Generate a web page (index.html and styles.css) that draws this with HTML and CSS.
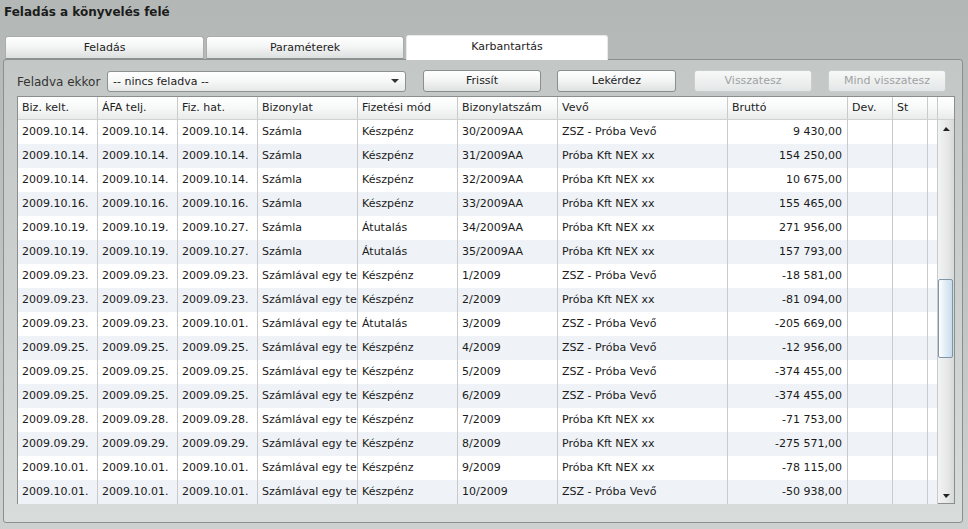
FILE: index.html
```html
<!DOCTYPE html>
<html lang="hu">
<head>
<meta charset="utf-8">
<title>Feladás a könyvelés felé</title>
<link rel="stylesheet" href="styles.css">
</head>
<body>
<div class="page">
  <div class="title">Feladás a könyvelés felé</div>
  <div class="tabs">
    <div class="tab t1">Feladás</div>
    <div class="tab t2">Paraméterek</div>
    <div class="tab t3 active">Karbantartás</div>
  </div>
  <div class="panel">
    <div class="toolbar">
      <span class="lbl">Feladva ekkor</span>
      <div class="select"><span>-- nincs feladva --</span><span class="arrow"></span></div>
      <div class="btn b1">Frissít</div>
      <div class="btn b2">Lekérdez</div>
      <div class="btn b3 disabled">Visszatesz</div>
      <div class="btn b4 disabled">Mind visszatesz</div>
    </div>
    <div class="grid">
      <div class="row head">
        <div class="c">Biz. kelt.</div><div class="c">ÁFA telj.</div><div class="c">Fiz. hat.</div><div class="c">Bizonylat</div><div class="c">Fizetési mód</div><div class="c">Bizonylatszám</div><div class="c">Vevő</div><div class="c">Bruttó</div><div class="c">Dev.</div><div class="c">St</div><div class="c"></div><div class="c last"></div>
      </div>
      <div class="body">
        <div class="rows">
          <div class="row"><div class="c">2009.10.14.</div><div class="c">2009.10.14.</div><div class="c">2009.10.14.</div><div class="c">Számla</div><div class="c">Készpénz</div><div class="c">30/2009AA</div><div class="c">ZSZ - Próba Vevő</div><div class="c r">9 430,00</div><div class="c"></div><div class="c"></div><div class="c"></div></div>
          <div class="row"><div class="c">2009.10.14.</div><div class="c">2009.10.14.</div><div class="c">2009.10.14.</div><div class="c">Számla</div><div class="c">Készpénz</div><div class="c">31/2009AA</div><div class="c">Próba Kft NEX xx</div><div class="c r">154 250,00</div><div class="c"></div><div class="c"></div><div class="c"></div></div>
          <div class="row"><div class="c">2009.10.14.</div><div class="c">2009.10.14.</div><div class="c">2009.10.14.</div><div class="c">Számla</div><div class="c">Készpénz</div><div class="c">32/2009AA</div><div class="c">Próba Kft NEX xx</div><div class="c r">10 675,00</div><div class="c"></div><div class="c"></div><div class="c"></div></div>
          <div class="row"><div class="c">2009.10.16.</div><div class="c">2009.10.16.</div><div class="c">2009.10.16.</div><div class="c">Számla</div><div class="c">Készpénz</div><div class="c">33/2009AA</div><div class="c">Próba Kft NEX xx</div><div class="c r">155 465,00</div><div class="c"></div><div class="c"></div><div class="c"></div></div>
          <div class="row"><div class="c">2009.10.19.</div><div class="c">2009.10.19.</div><div class="c">2009.10.27.</div><div class="c">Számla</div><div class="c">Átutalás</div><div class="c">34/2009AA</div><div class="c">Próba Kft NEX xx</div><div class="c r">271 956,00</div><div class="c"></div><div class="c"></div><div class="c"></div></div>
          <div class="row"><div class="c">2009.10.19.</div><div class="c">2009.10.19.</div><div class="c">2009.10.27.</div><div class="c">Számla</div><div class="c">Átutalás</div><div class="c">35/2009AA</div><div class="c">Próba Kft NEX xx</div><div class="c r">157 793,00</div><div class="c"></div><div class="c"></div><div class="c"></div></div>
          <div class="row"><div class="c">2009.09.23.</div><div class="c">2009.09.23.</div><div class="c">2009.09.23.</div><div class="c">Számlával egy te</div><div class="c">Készpénz</div><div class="c">1/2009</div><div class="c">ZSZ - Próba Vevő</div><div class="c r">-18 581,00</div><div class="c"></div><div class="c"></div><div class="c"></div></div>
          <div class="row"><div class="c">2009.09.23.</div><div class="c">2009.09.23.</div><div class="c">2009.09.23.</div><div class="c">Számlával egy te</div><div class="c">Készpénz</div><div class="c">2/2009</div><div class="c">Próba Kft NEX xx</div><div class="c r">-81 094,00</div><div class="c"></div><div class="c"></div><div class="c"></div></div>
          <div class="row"><div class="c">2009.09.23.</div><div class="c">2009.09.23.</div><div class="c">2009.10.01.</div><div class="c">Számlával egy te</div><div class="c">Átutalás</div><div class="c">3/2009</div><div class="c">ZSZ - Próba Vevő</div><div class="c r">-205 669,00</div><div class="c"></div><div class="c"></div><div class="c"></div></div>
          <div class="row"><div class="c">2009.09.25.</div><div class="c">2009.09.25.</div><div class="c">2009.09.25.</div><div class="c">Számlával egy te</div><div class="c">Készpénz</div><div class="c">4/2009</div><div class="c">ZSZ - Próba Vevő</div><div class="c r">-12 956,00</div><div class="c"></div><div class="c"></div><div class="c"></div></div>
          <div class="row"><div class="c">2009.09.25.</div><div class="c">2009.09.25.</div><div class="c">2009.09.25.</div><div class="c">Számlával egy te</div><div class="c">Készpénz</div><div class="c">5/2009</div><div class="c">ZSZ - Próba Vevő</div><div class="c r">-374 455,00</div><div class="c"></div><div class="c"></div><div class="c"></div></div>
          <div class="row"><div class="c">2009.09.25.</div><div class="c">2009.09.25.</div><div class="c">2009.09.25.</div><div class="c">Számlával egy te</div><div class="c">Készpénz</div><div class="c">6/2009</div><div class="c">ZSZ - Próba Vevő</div><div class="c r">-374 455,00</div><div class="c"></div><div class="c"></div><div class="c"></div></div>
          <div class="row"><div class="c">2009.09.28.</div><div class="c">2009.09.28.</div><div class="c">2009.09.28.</div><div class="c">Számlával egy te</div><div class="c">Készpénz</div><div class="c">7/2009</div><div class="c">Próba Kft NEX xx</div><div class="c r">-71 753,00</div><div class="c"></div><div class="c"></div><div class="c"></div></div>
          <div class="row"><div class="c">2009.09.29.</div><div class="c">2009.09.29.</div><div class="c">2009.09.29.</div><div class="c">Számlával egy te</div><div class="c">Készpénz</div><div class="c">8/2009</div><div class="c">Próba Kft NEX xx</div><div class="c r">-275 571,00</div><div class="c"></div><div class="c"></div><div class="c"></div></div>
          <div class="row"><div class="c">2009.10.01.</div><div class="c">2009.10.01.</div><div class="c">2009.10.01.</div><div class="c">Számlával egy te</div><div class="c">Készpénz</div><div class="c">9/2009</div><div class="c">Próba Kft NEX xx</div><div class="c r">-78 115,00</div><div class="c"></div><div class="c"></div><div class="c"></div></div>
          <div class="row"><div class="c">2009.10.01.</div><div class="c">2009.10.01.</div><div class="c">2009.10.01.</div><div class="c">Számlával egy te</div><div class="c">Készpénz</div><div class="c">10/2009</div><div class="c">ZSZ - Próba Vevő</div><div class="c r">-50 938,00</div><div class="c"></div><div class="c"></div><div class="c"></div></div>
        </div>
        <div class="scrollbar">
          <div class="sarrow up"></div>
          <div class="track"><div class="thumb"></div></div>
          <div class="sarrow down"></div>
        </div>
      </div>
    </div>
  </div>
</div>
</body>
</html>
```

FILE: styles.css
```css
* { box-sizing: border-box; }
html, body { margin: 0; padding: 0; }
body {
  width: 968px;
  height: 529px;
  overflow: hidden;
  font-family: "DejaVu Sans", Verdana, sans-serif;
  font-size: 11px;
  color: #1a1a1a;
  background: linear-gradient(to bottom, #b3b8b6 0%, #bcc1bf 40%, #cdd1cf 100%);
}
.page { width: 968px; height: 529px; }
.title {
  height: 35px;
  padding: 4px 0 0 4px;
  font-weight: bold;
  font-size: 12px;
  line-height: 16px;
  color: #1c1c1c;
}
.tabs {
  display: flex;
  align-items: flex-end;
  gap: 2px;
  height: 24px;
  padding-left: 5px;
}
.tab {
  height: 23px;
  line-height: 22px;
  text-align: center;
  border: 1px solid #a9aeac;
  border-bottom-color: #8f9492;
  border-radius: 3px 3px 0 0;
  background: linear-gradient(to bottom, #ffffff 0%, #f4f5f5 45%, #dde0e0 100%);
  color: #222;
}
.t1 { width: 199px; }
.t2 { width: 198px; }
.t3 { width: 202px; }
.tab.active {
  height: 25px;
  margin-bottom: -1px;
  line-height: 22px;
  background: #ffffff;
  border-color: #e8eaea;
  border-bottom: none;
  position: relative;
  z-index: 1;
}
.panel {
  margin-left: 3px;
  width: 960px;
  height: 464px;
  border: 1px solid #8b908e;
  border-radius: 3px;
  background: linear-gradient(to bottom, #c3c8c6 0%, #ccd0ce 50%, #d8dcda 100%);
  padding: 10px 0 0 13px;
}
.toolbar {
  display: flex;
  align-items: center;
  height: 22px;
}
.lbl {
  width: 90px;
  font-size: 12px;
  color: #333;
  padding-top: 1px;
}
.select {
  width: 299px;
  height: 21px;
  border: 1px solid #8d9290;
  border-radius: 3px;
  background: linear-gradient(to bottom, #ffffff 0%, #f6f7f7 50%, #e6e8e8 100%);
  display: flex;
  align-items: center;
  justify-content: space-between;
  padding: 0 6px 0 5px;
  color: #222;
}
.arrow {
  width: 0; height: 0;
  border-left: 4px solid transparent;
  border-right: 4px solid transparent;
  border-top: 4px solid #333;
}
.btn {
  height: 22px;
  width: 118px;
  line-height: 20px;
  text-align: center;
  border: 1px solid #8a8f8d;
  border-radius: 3px;
  background: linear-gradient(to bottom, #ffffff 0%, #f4f5f5 45%, #dfe2e2 100%);
  color: #222;
}
.b1 { margin-left: 17px; }
.b2 { margin-left: 16px; width: 119px; }
.b3 { margin-left: 18px; }
.b4 { margin-left: 16px; }
.btn.disabled {
  border-color: #c9cdcc;
  color: #9ea2a3;
  background: linear-gradient(to bottom, #f7f8f8 0%, #eef0f0 50%, #e4e7e7 100%);
}
.grid {
  margin-top: 4px;
  width: 938px;
  height: 408px;
  border: 1px solid #8a8f8d;
  background: #ffffff;
  display: flex;
  flex-direction: column;
}
.row {
  display: grid;
  grid-template-columns: 80px 80px 80px 100px 100px 100px 170px 120px 45px 35px 10px;
  height: 24px;
  line-height: 24px;
}
.row:nth-child(even) { background: #eff2f6; }
.row.head {
  grid-template-columns: 80px 80px 80px 100px 100px 100px 170px 120px 45px 35px 10px 16px;
  height: 23px;
  line-height: 22px;
  background: linear-gradient(to bottom, #ffffff 0%, #f7f8f8 50%, #e9ebeb 100%);
  border-bottom: 1px solid #cfd2d2;
}
.c {
  border-right: 1px solid #cacaca;
  padding: 0 0 0 4px;
  white-space: nowrap;
  overflow: hidden;
}
.head .c { color: #222; }
.head .c.last { border-right: none; }
.c.r { text-align: right; padding-right: 5px; }
.body {
  display: flex;
  flex: 1;
  min-height: 0;
}
.rows { width: 920px; }
.scrollbar {
  width: 16px;
  display: flex;
  flex-direction: column;
  background: linear-gradient(to right, #f2f3f3 0%, #e6e8e8 60%, #d6d9d9 100%);
}
.sarrow {
  height: 17px;
  display: flex;
  align-items: center;
  justify-content: center;
}
.sarrow::before {
  content: "";
  width: 0; height: 0;
  border-left: 3px solid transparent;
  border-right: 4px solid transparent;
}
.up::before { border-bottom: 4px solid #222; margin-top: 1px; }
.down::before { border-top: 4px solid #222; margin-top: 2px; }
.track {
  flex: 1;
  padding-top: 142px;
}
.thumb {
  width: 15px;
  height: 79px;
  border: 1px solid #7f95a8;
  border-radius: 2px;
  background: linear-gradient(to right, #ffffff 0%, #e6f0f8 40%, #c9dced 100%);
}
```
